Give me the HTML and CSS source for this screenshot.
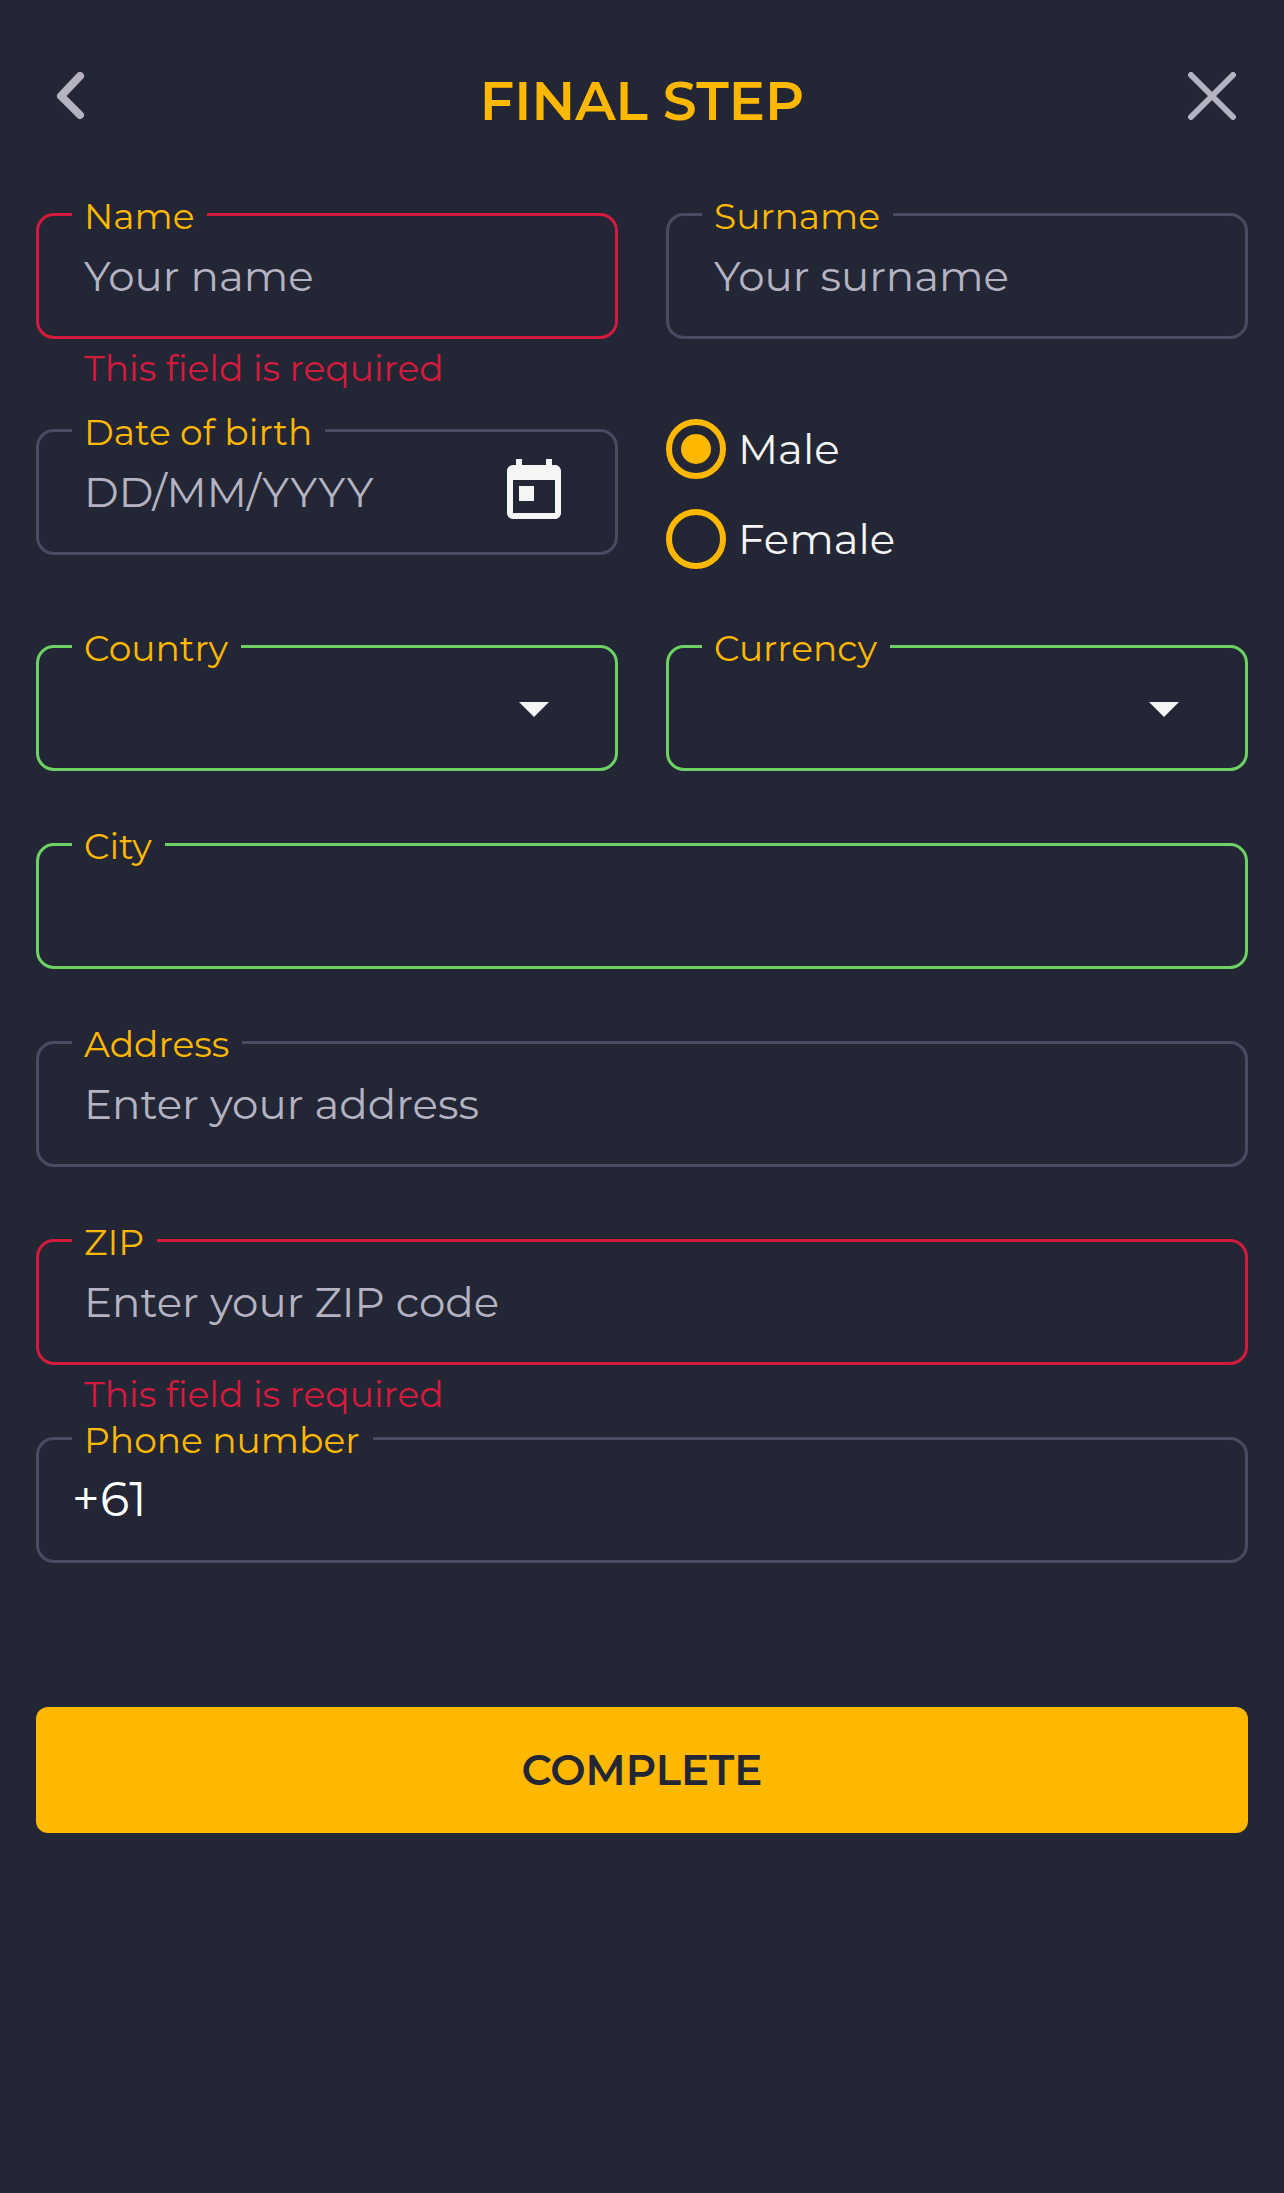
FILE: index.html
```html
<!DOCTYPE html>
<html lang="en">
<head>
    <meta charset="UTF-8">
    <meta name="viewport" content="width=device-width, initial-scale=1.0">
    <title>Final step</title>
    <link rel="stylesheet" href="styles.css">
</head>
<body>
    <header class="header">
        <button type="button" class="icon-button" aria-label="Back">
            <svg class="header-icon" viewBox="0 0 48 48"><path d="M32 4 13 24l19 19" stroke-width="8"/></svg>
        </button>
        <h1>FINAL STEP</h1>
        <button type="button" class="icon-button" aria-label="Close">
            <svg class="header-icon" viewBox="0 0 48 48"><path d="M3 3l42 42M45 3 3 45" stroke-width="6"/></svg>
        </button>
    </header>
    <form class="form" novalidate>
        <div class="row">
            <div class="field">
                <div class="box error">
                    <label for="name">Name</label>
                    <input type="text" id="name" placeholder="Your name">
                </div>
                <p class="message">This field is required</p>
            </div>
            <div class="field">
                <div class="box">
                    <label for="surname">Surname</label>
                    <input type="text" id="surname" placeholder="Your surname">
                </div>
            </div>
        </div>
        <div class="row">
            <div class="field">
                <div class="box">
                    <label for="birth">Date of birth</label>
                    <input type="text" id="birth" placeholder="DD/MM/YYYY">
                    <button type="button" class="icon-button date-button" aria-label="Open calendar">
                        <svg class="field-icon" viewBox="0 0 24 24"><path d="M19 3h-1V1h-2v2H8V1H6v2H5c-1.1 0-2 .9-2 2v14c0 1.1.9 2 2 2h14c1.1 0 2-.9 2-2V5c0-1.1-.9-2-2-2zm0 16H5V8h14v11zM7 10h5v5H7z"/></svg>
                    </button>
                </div>
            </div>
            <div class="radios" role="radiogroup" aria-label="Gender">
                <label class="radio"><input type="radio" name="gender" value="male" checked>Male</label>
                <label class="radio"><input type="radio" name="gender" value="female">Female</label>
            </div>
        </div>
        <div class="row last">
            <div class="field">
                <div class="box valid">
                    <label for="country">Country</label>
                    <select id="country"><option value=""></option></select>
                    <svg class="field-icon arrow" viewBox="0 0 24 24"><path d="M7 10l5 5 5-5z"/></svg>
                </div>
            </div>
            <div class="field">
                <div class="box valid">
                    <label for="currency">Currency</label>
                    <select id="currency"><option value=""></option></select>
                    <svg class="field-icon arrow" viewBox="0 0 24 24"><path d="M7 10l5 5 5-5z"/></svg>
                </div>
            </div>
        </div>
        <div class="field">
            <div class="box valid">
                <label for="city">City</label>
                <input type="text" id="city">
            </div>
        </div>
        <div class="field">
            <div class="box">
                <label for="address">Address</label>
                <input type="text" id="address" placeholder="Enter your address">
            </div>
        </div>
        <div class="field">
            <div class="box error">
                <label for="zip">ZIP</label>
                <input type="text" id="zip" placeholder="Enter your ZIP code">
            </div>
            <p class="message">This field is required</p>
        </div>
        <div class="field">
            <div class="box">
                <label for="phone">Phone number</label>
                <input type="tel" id="phone" class="phone" value="+61">
            </div>
        </div>
        <button type="submit" class="submit">COMPLETE</button>
    </form>
</body>
</html>
```

FILE: styles.css
```css
* { box-sizing: border-box; }
body { margin: 0; background-color: #232634; color: #f5f5f5; font-family: Montserrat, Inter, sans-serif; font-weight: 400; }
button, input, select { font: inherit; color: inherit; background: none; border: none; padding: 0; margin: 0; outline: none; }
button { cursor: pointer; }
svg { display: block; }

.header { display: flex; justify-content: space-between; align-items: flex-start; padding: 72px 48px 83px; }
h1 { margin: 0; font-size: 54px; line-height: 58px; font-weight: 600; color: #ffb800; }
.header-icon { width: 48px; height: 48px; fill: none; stroke: #b5b3c1; stroke-linecap: round; stroke-linejoin: round; }

.form { padding: 0 36px 36px; }
.row { display: grid; grid-template-columns: repeat(2, minmax(0, 1fr)); column-gap: 48px; margin-bottom: 18px; }
.row.last { margin-bottom: 0; }
.field { min-height: 198px; }
.box { position: relative; display: flex; align-items: center; height: 126px; border: 3px solid #4a4b63; border-radius: 18px; }
.box.error { border-color: #d41b3d; }
.box.valid { border-color: #6dd164; }
/* the label covers a piece of the top border */
.box label { position: absolute; top: -18px; left: 33px; padding: 0 13px 0 12px; background-color: #232634; color: #ffb800; font-size: 36px; line-height: 36px; }
.box input, .box select { flex: 1; min-width: 0; height: 120px; padding: 0 45px; font-size: 42px; }
.box input::placeholder { color: #b5b3c1; opacity: 1; }
.box input.phone { padding: 0 33px 3px; font-size: 48px; color: #fff; }
.box select { appearance: none; cursor: pointer; }
.box option { background-color: #232634; }
.field-icon { width: 72px; height: 72px; fill: #f5f5f5; }
.date-button { margin-right: 45px; }
.arrow { position: absolute; right: 45px; pointer-events: none; }
.message { margin: 0; padding: 11px 48px 0; font-size: 36px; line-height: 36px; color: #d41b3d; }

.radios { display: flex; flex-direction: column; align-items: flex-start; gap: 30px; margin-top: -10px; }
.radio { display: flex; align-items: center; gap: 12px; font-size: 42px; line-height: 60px; cursor: pointer; }
.radio input { appearance: none; width: 60px; height: 60px; border: 6px solid #ffb800; border-radius: 50%; }
.radio input:checked { padding: 9px; background-color: #ffb800; background-clip: content-box; }

.submit { width: 100%; height: 126px; margin-top: 72px; border-radius: 12px; background-color: #ffb800; color: #232634; font-size: 42px; font-weight: 600; }
```
